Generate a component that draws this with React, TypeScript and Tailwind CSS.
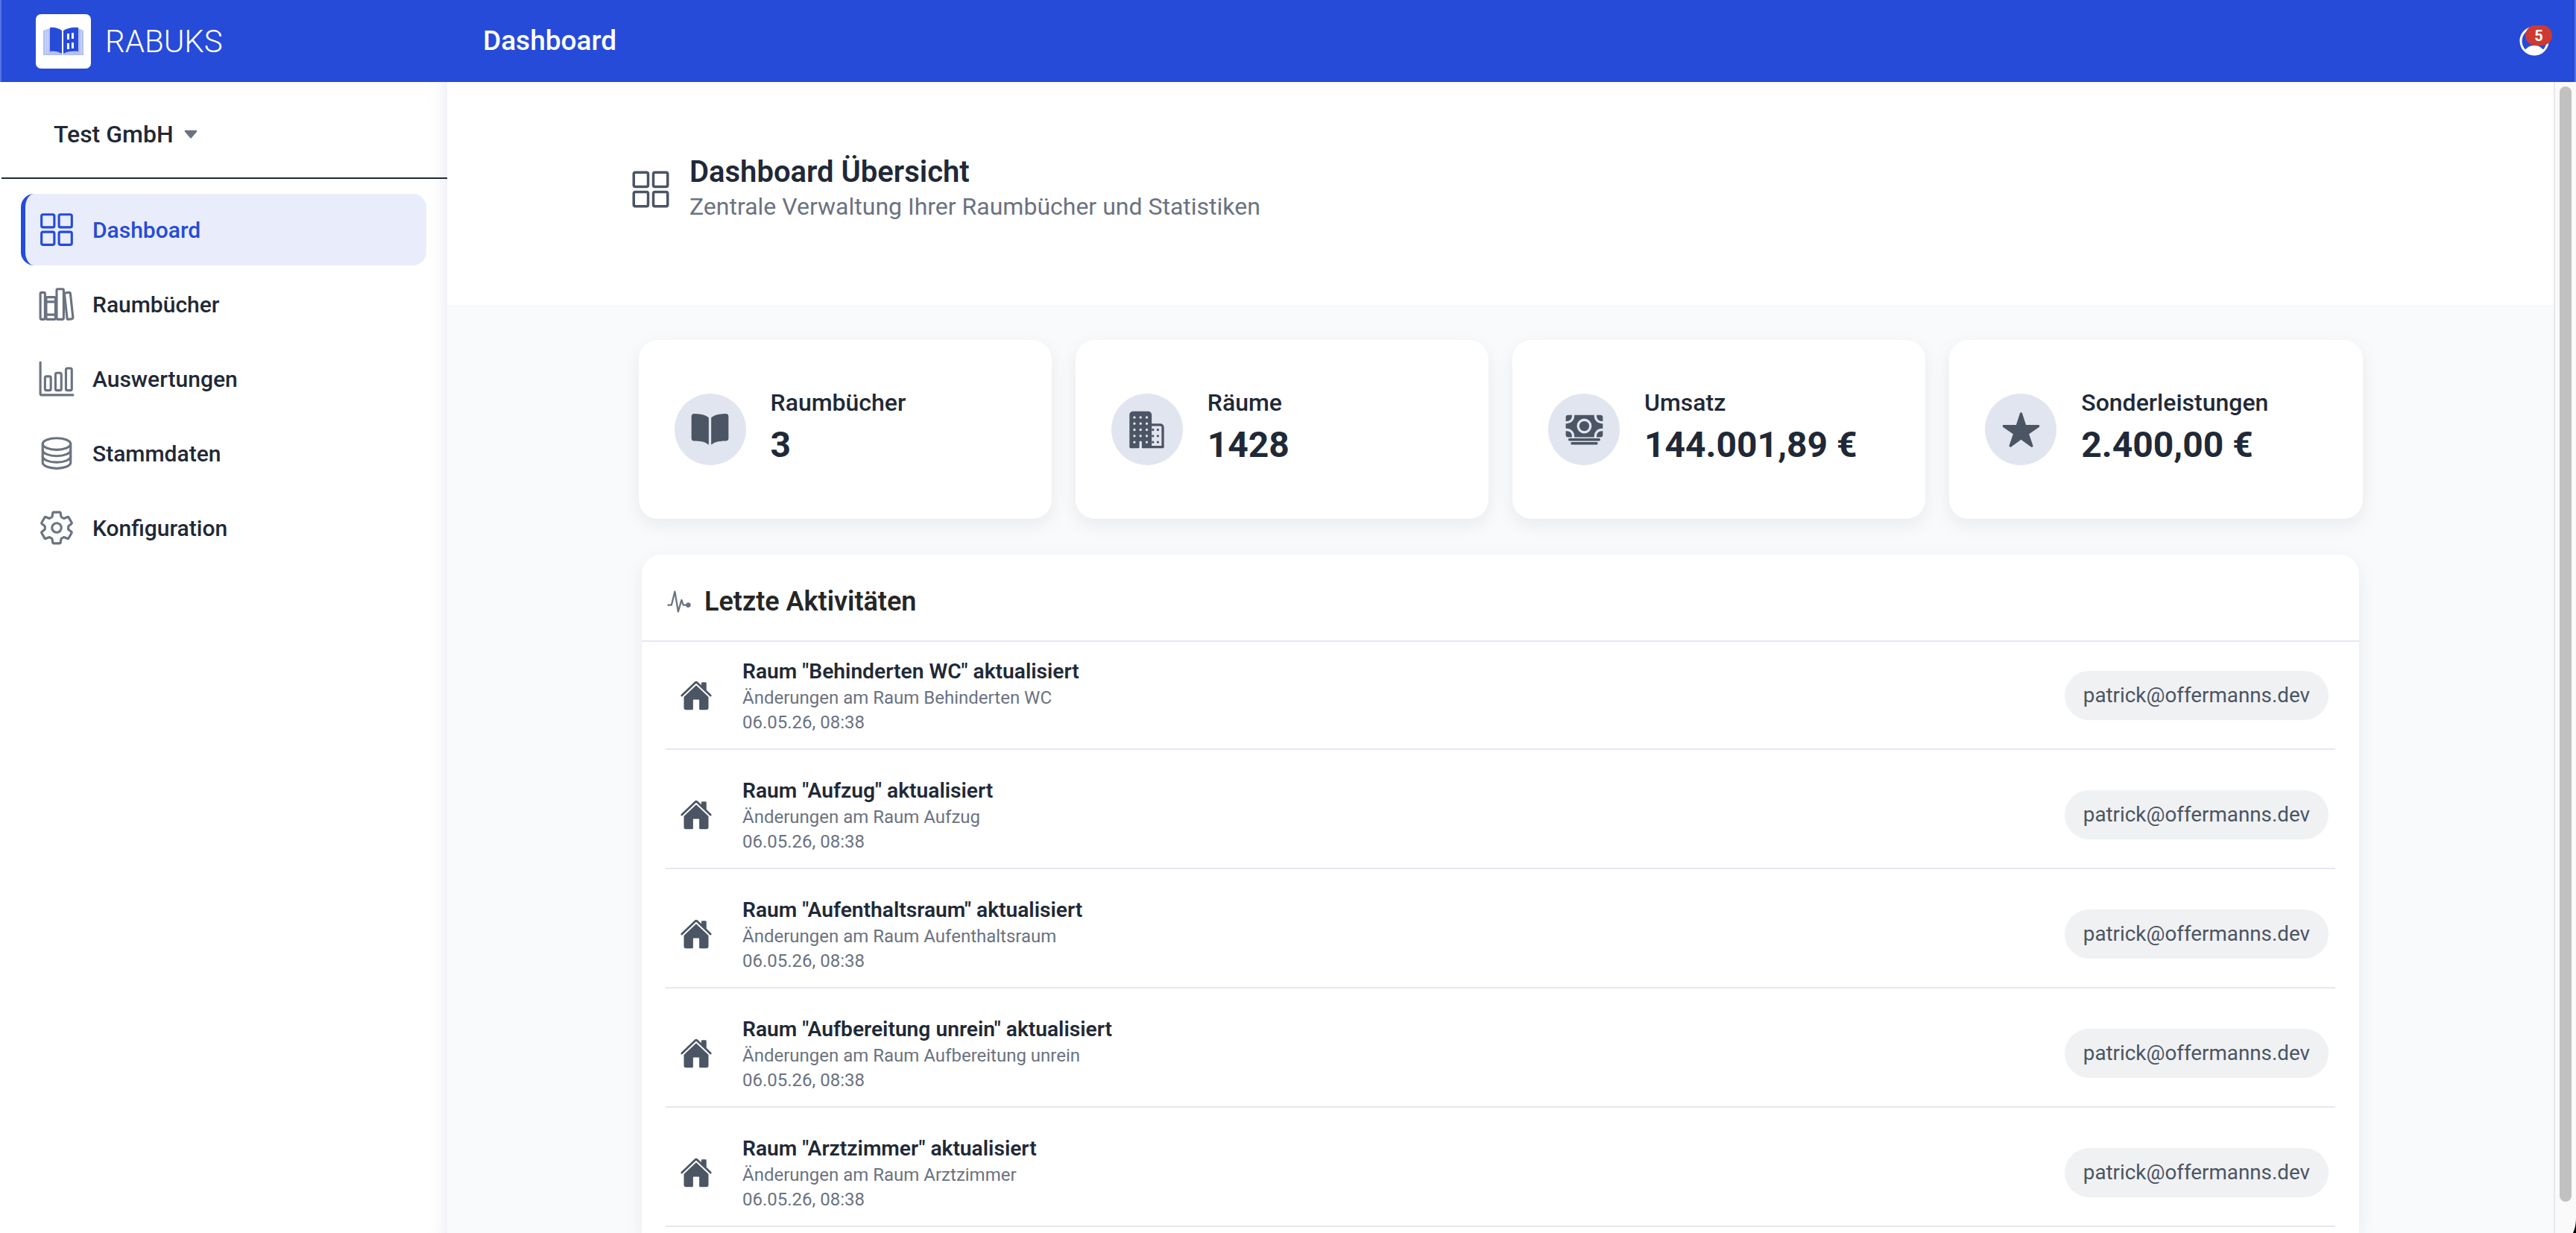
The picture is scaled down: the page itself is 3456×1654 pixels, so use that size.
import {
  IoBarChartOutline,
  IoBook,
  IoBusiness,
  IoCaretDown,
  IoCash,
  IoGridOutline,
  IoHome,
  IoLibraryOutline,
  IoPersonCircleOutline,
  IoPulse,
  IoServerOutline,
  IoSettingsOutline,
  IoStar,
} from "react-icons/io5";

const font = { fontFamily: "Roboto, sans-serif" };

const navItems = [
  { label: "Dashboard", icon: IoGridOutline, active: true },
  { label: "Raumbücher", icon: IoLibraryOutline },
  { label: "Auswertungen", icon: IoBarChartOutline },
  { label: "Stammdaten", icon: IoServerOutline },
  { label: "Konfiguration", icon: IoSettingsOutline },
];

const stats = [
  { label: "Raumbücher", value: "3", icon: IoBook },
  { label: "Räume", value: "1428", icon: IoBusiness },
  { label: "Umsatz", value: "144.001,89 €", icon: IoCash },
  { label: "Sonderleistungen", value: "2.400,00 €", icon: IoStar },
];

const rooms = ["Behinderten WC", "Aufzug", "Aufenthaltsraum", "Aufbereitung unrein", "Arztzimmer"];

function Logo() {
  return (
    <div className="flex h-[73px] w-[74px] items-center justify-center rounded-[7px] bg-white">
      <svg viewBox="0 0 54 40" className="h-[40px] w-[54px]">
        {/* page edges */}
        <path d="M0 6l9-3v31c6-1 11 0 16 3l1 2H0z" fill="#b3c0f1" />
        <path d="M54 6l-7-3v31c-8-1-14 0-20 3l-1 2h28z" fill="#b3c0f1" />
        <path d="M3 6v31 M6 5v32 M51 6v31" stroke="#e3e8fa" strokeWidth="0.8" />
        {/* pages */}
        <path d="M9 2c6-1 12 1 16 4v31c-5-3-10-4-16-3z" fill="#264bd9" />
        <path d="M27 6c5-3 12-5 20-4v32c-8-1-15 0-20 3z" fill="#264bd9" />
        {/* windows */}
        <path d="M32 10h3v8h-3z M38 9h3v8h-3z M32 23h3v8h-3z M38 22h3v8h-3z" fill="#fff" />
      </svg>
    </div>
  );
}

function NavItem({ label, icon: Icon, active }: { label: string; icon: typeof IoBook; active?: boolean }) {
  return (
    <div
      className={`flex h-[96px] items-center gap-[23px] rounded-[18px] border-l-[6px] pl-[17px] text-[30px] font-medium ${
        active ? "border-[#264bd9] bg-[#e9edfb] text-[#264bd9]" : "border-transparent text-[#1f2937]"
      }`}
    >
      <Icon size={50} className={active ? "text-[#264bd9]" : "text-[#6b7280]"} />
      <span>{label}</span>
    </div>
  );
}

function StatCard({ label, value, icon: Icon }: { label: string; value: string; icon: typeof IoBook }) {
  return (
    <div className="flex h-[240px] items-center gap-[33px] rounded-[26px] bg-white pl-[48px] shadow-[0_8px_24px_rgba(17,24,39,0.07)]">
      <div className="flex h-[96px] w-[96px] items-center justify-center rounded-full bg-[#e1e5f0]">
        <Icon size={53} className="text-[#4b5563]" />
      </div>
      <div className="flex flex-col pb-[6px] text-[#1f2937]">
        <span className="text-[32px] leading-[44px] font-medium">{label}</span>
        <span className="mt-[4px] text-[48px] leading-[62px] font-bold">{value}</span>
      </div>
    </div>
  );
}

function ActivityRow({ room }: { room: string }) {
  return (
    <div className="flex h-[145px] shrink-0 items-center border-b-2 border-[#e5e7f2] pr-[9px] pl-[19px]">
      <IoHome size={44} className="text-[#4b5563]" />
      <div className="ml-[40px] flex flex-1 flex-col pt-[3px]">
        <span className="text-[28.2px] leading-[38px] font-semibold text-[#1f2937]">Raum "{room}" aktualisiert</span>
        <span className="text-[24px] leading-[33px] text-[#6b7280]">Änderungen am Raum {room}</span>
        <span className="text-[24px] leading-[33px] text-[#6b7280]">06.05.26, 08:38</span>
      </div>
      <span className="flex h-[66px] items-center rounded-full bg-[#f0f1f3] px-[25px] text-[27.8px] text-[#4b5563]">
        patrick@offermanns.dev
      </span>
    </div>
  );
}

export default function App() {
  return (
    <div className="relative flex h-[1654px] w-[3456px] flex-col overflow-hidden bg-white" style={font}>
      {/* Top bar */}
      <header className="flex h-[110px] shrink-0 items-center border-x-2 border-[#5672e2] bg-[#264bd9] text-white">
        <div className="flex w-[598px] items-center gap-[19px] pl-[46px]">
          <Logo />
          <span className="text-[42px] font-light">RABUKS</span>
        </div>
        <span className="ml-[48px] flex-1 text-[37px] font-medium">Dashboard</span>
        <div className="relative mr-[30px] h-[48px] w-[48px]">
          <IoPersonCircleOutline size={48} />
          <span className="absolute top-[3px] left-[12px] flex h-[27px] w-[36px] items-center justify-center rounded-full bg-[#cd3a32] text-[20px] font-bold">
            5
          </span>
        </div>
      </header>

      <div className="flex min-h-0 flex-1">
        {/* Sidebar */}
        <aside className="flex w-[600px] shrink-0 flex-col bg-white pl-[2px] shadow-[inset_-24px_0_24px_-24px_rgba(100,100,180,0.18)]">
          <div className="flex h-[130px] shrink-0 items-center gap-[10px] border-b-2 border-[#1f2937] pt-[12px] pl-[70px] text-[32px] font-medium text-[#1f2937]">
            <span>Test GmbH</span>
            <IoCaretDown size={26} className="text-[#6b7280]" />
          </div>
          <nav className="flex flex-col gap-[4px] pt-[20px] pr-[28px] pl-[26px]">
            {navItems.map((item) => (
              <NavItem key={item.label} {...item} />
            ))}
          </nav>
        </aside>

        {/* Main scroll area */}
        <main className="flex min-w-0 flex-1 flex-col bg-[#f9fafb]">
          <div className="flex h-[299px] shrink-0 items-start gap-[24px] bg-white pt-[96px] pl-[245px]">
            <IoGridOutline size={56} className="mt-[20px] text-[#4b5563]" />
            <div className="flex flex-col">
              <span className="text-[40px] leading-[50px] font-semibold text-[#1f2937]">Dashboard Übersicht</span>
              <span className="text-[32px] leading-[42px] text-[#6b7280]">
                Zentrale Verwaltung Ihrer Raumbücher und Statistiken
              </span>
            </div>
          </div>
          <div className="flex min-h-0 flex-1 flex-col items-center pt-[47px]">
            <div className="grid w-[2313px] grid-cols-4 gap-[32px]">
              {stats.map((stat) => (
                <StatCard key={stat.label} {...stat} />
              ))}
            </div>
            <section className="mt-[48px] w-[2304px] flex-1 rounded-t-[26px] bg-white shadow-[0_8px_24px_rgba(17,24,39,0.07)]">
              <div className="flex h-[117px] items-center gap-[16px] border-b-2 border-[#e5e7f2] pt-[10px] pl-[32px] text-[36px] font-semibold text-[#262626]">
                <IoPulse size={36} className="text-[#6b7280]" />
                <span>Letzte Aktivitäten</span>
              </div>
              <div className="flex flex-col gap-[15px] px-[32px]">
                {rooms.map((room) => (
                  <ActivityRow key={room} room={room} />
                ))}
              </div>
            </section>
          </div>
        </main>

        {/* Scrollbar */}
        <div className="w-[30px] shrink-0 border-l-2 border-[#e8e8e8] bg-[#fafafa] pt-[6px] pl-[6px]">
          <div className="h-[1496px] w-[16px] rounded-full bg-[#c1c1c1]" />
        </div>
      </div>

      {/* Window corner */}
      <svg viewBox="0 0 6 20" className="absolute right-0 bottom-0 h-[20px] w-[6px]">
        <path d="M6 0C6 9 4 16 2 20h4z" fill="#000" />
      </svg>
    </div>
  );
}
